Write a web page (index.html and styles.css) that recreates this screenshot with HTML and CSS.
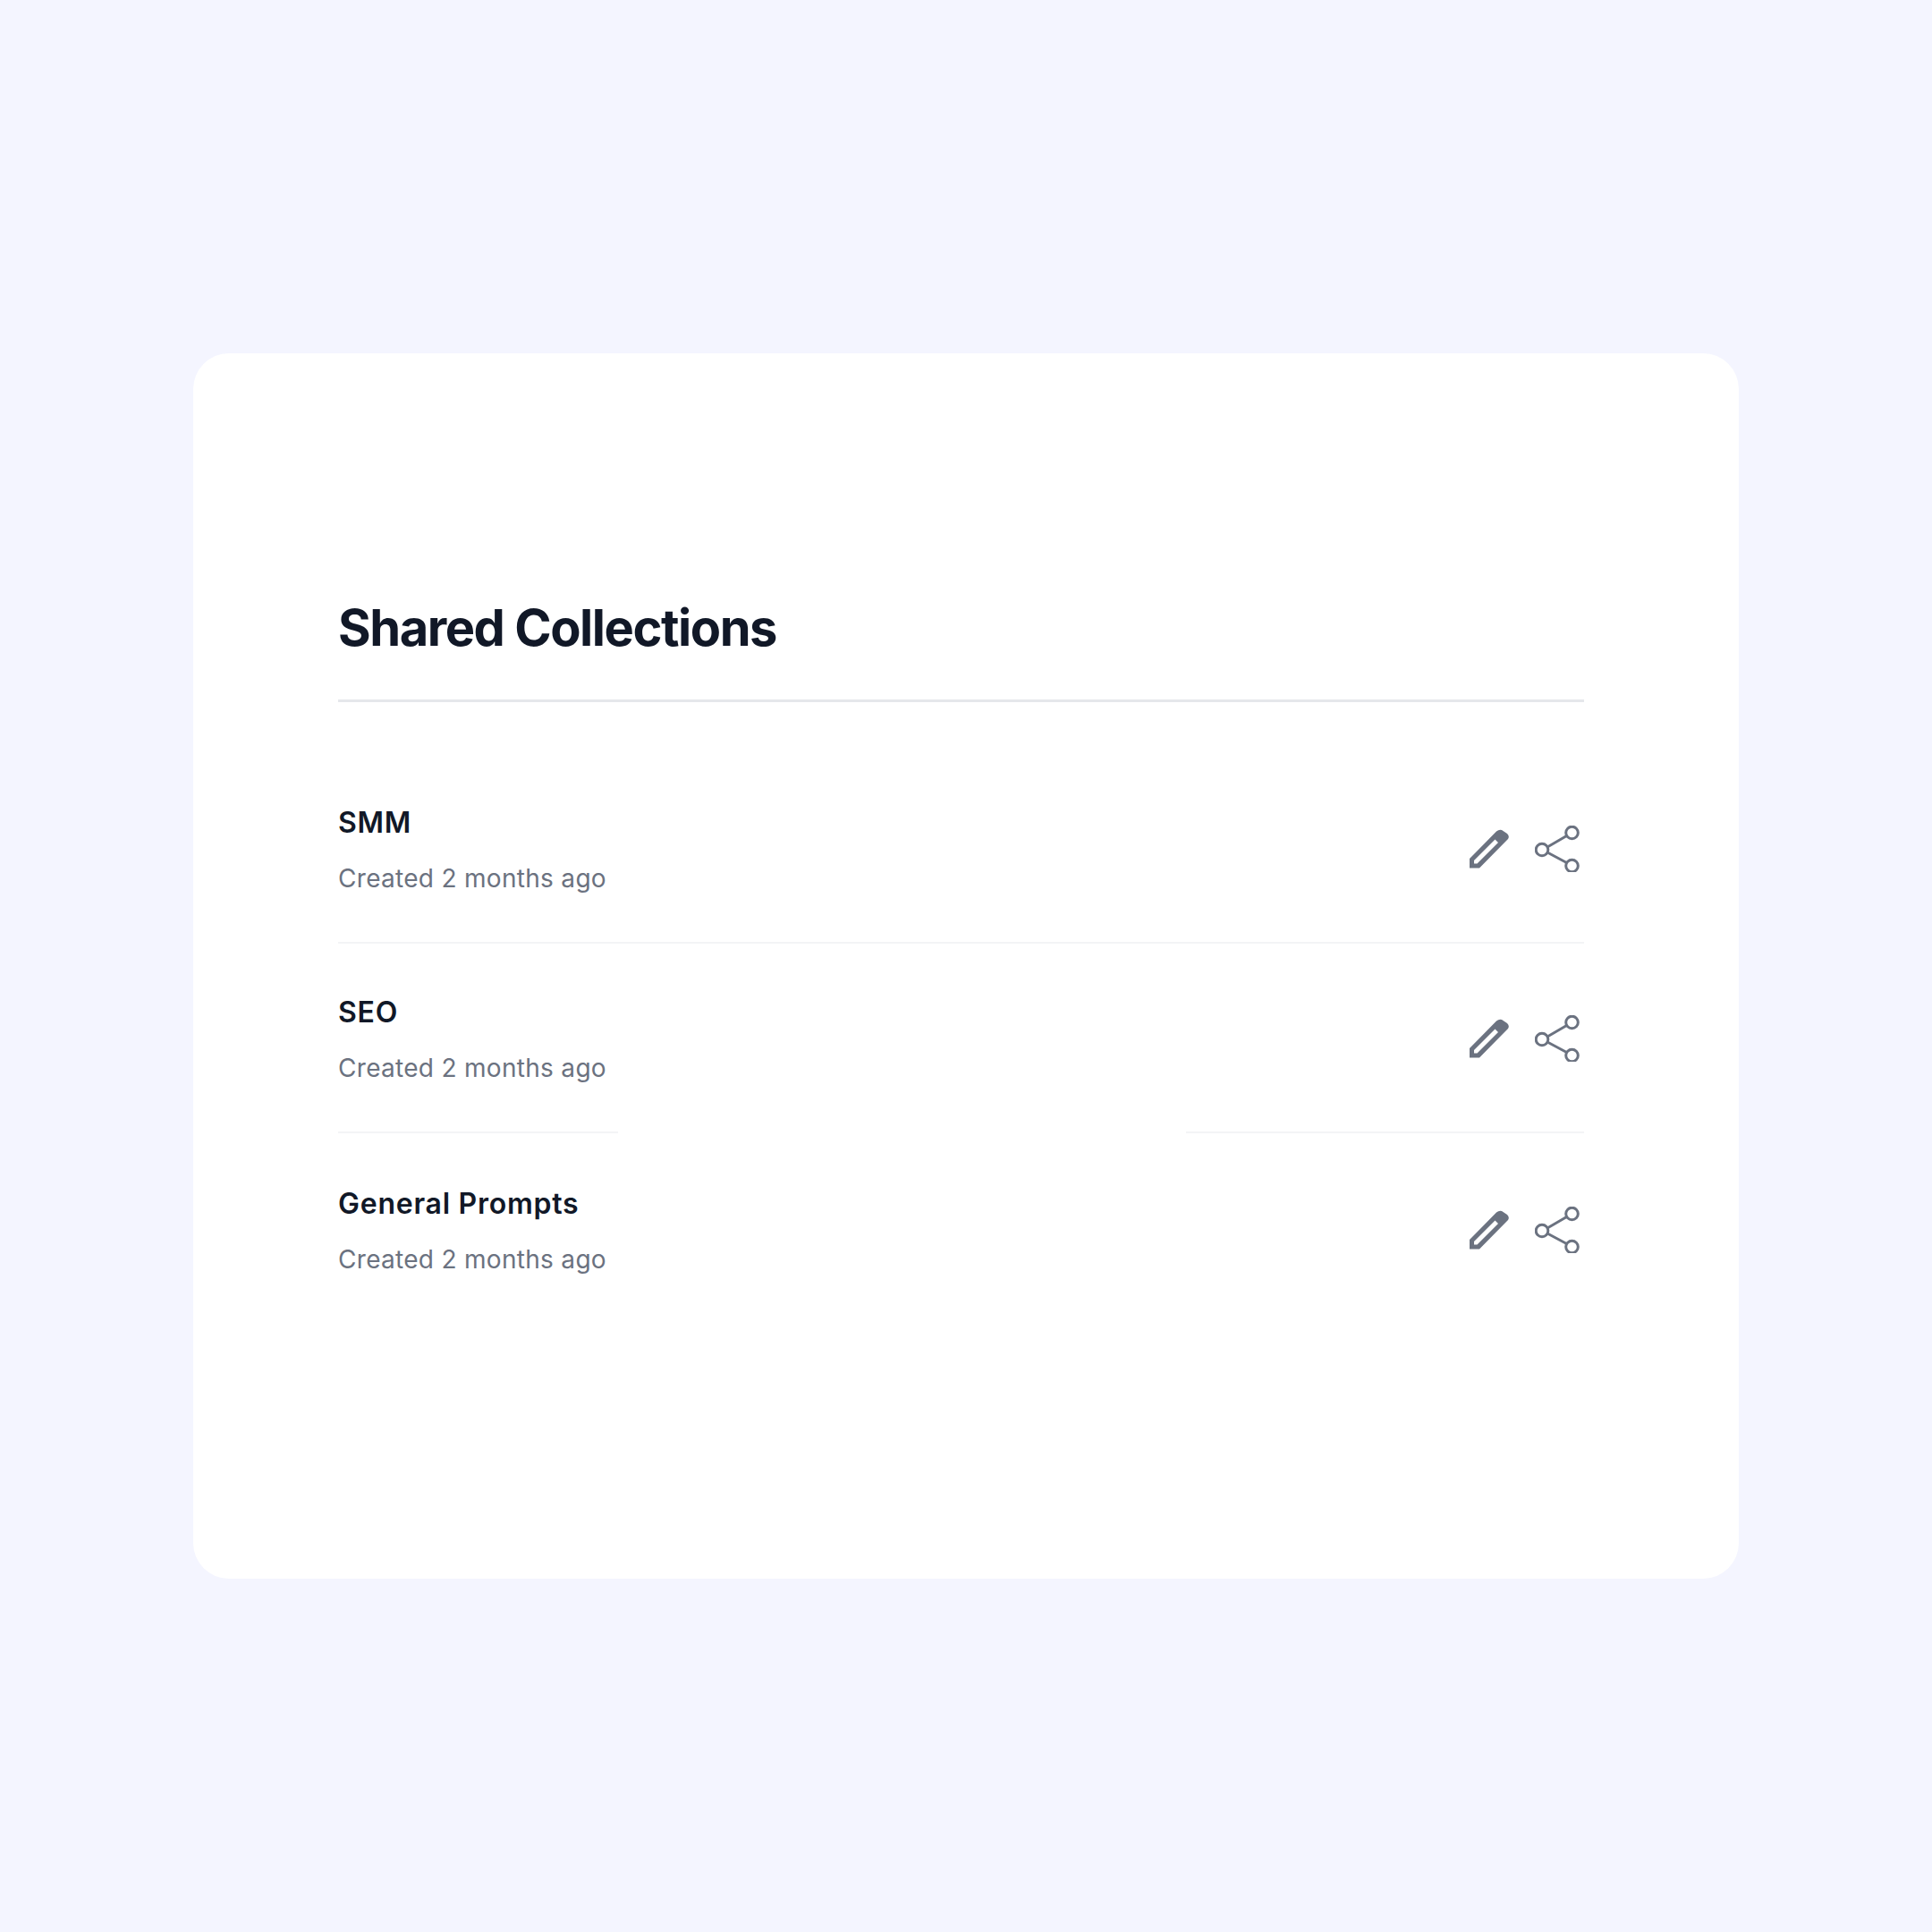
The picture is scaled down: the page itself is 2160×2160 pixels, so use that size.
FILE: index.html
```html
<!doctype html>
<html lang="en">
  <head>
    <meta charset="UTF-8" />
    <title>Shared Collections</title>
    <link rel="stylesheet" href="styles.css">
  </head>
  <body>
    <div class="card">
      <h1 class="card-title">Shared Collections</h1>

      <ul class="collection-list">
        <li class="collection-item">
          <div class="collection-info">
            <h2 class="collection-name">SMM</h2>
            <p class="collection-date">Created 2 months ago</p>
          </div>
          <div class="collection-actions">
            <svg class="icon-edit" viewBox="0 0 44 44">
              <path d="M0 43.5 V33 L30 2.5 Q33 0 36 1 L42 5 Q45 8 43 11 L11 43.5 Z M5 35 V38.5 H8.5 L32 15 L28.5 11.5 Z" />
            </svg>
            <svg class="icon-share" viewBox="0 0 50 52">
              <circle cx="41.5" cy="8" r="6.8" />
              <circle cx="8" cy="27" r="6.8" />
              <circle cx="41.5" cy="45" r="6.8" />
              <path d="M14 24 L35.5 11.5 M14 30 L35.5 41.5" />
            </svg>
          </div>
        </li>
        <li class="collection-item">
          <div class="collection-info">
            <h2 class="collection-name">SEO</h2>
            <p class="collection-date">Created 2 months ago</p>
          </div>
          <div class="collection-actions">
            <svg class="icon-edit" viewBox="0 0 44 44">
              <path d="M0 43.5 V33 L30 2.5 Q33 0 36 1 L42 5 Q45 8 43 11 L11 43.5 Z M5 35 V38.5 H8.5 L32 15 L28.5 11.5 Z" />
            </svg>
            <svg class="icon-share" viewBox="0 0 50 52">
              <circle cx="41.5" cy="8" r="6.8" />
              <circle cx="8" cy="27" r="6.8" />
              <circle cx="41.5" cy="45" r="6.8" />
              <path d="M14 24 L35.5 11.5 M14 30 L35.5 41.5" />
            </svg>
          </div>
          <div class="divider-mask"></div>
        </li>
        <li class="collection-item">
          <div class="collection-info">
            <h2 class="collection-name">General Prompts</h2>
            <p class="collection-date">Created 2 months ago</p>
          </div>
          <div class="collection-actions">
            <svg class="icon-edit" viewBox="0 0 44 44">
              <path d="M0 43.5 V33 L30 2.5 Q33 0 36 1 L42 5 Q45 8 43 11 L11 43.5 Z M5 35 V38.5 H8.5 L32 15 L28.5 11.5 Z" />
            </svg>
            <svg class="icon-share" viewBox="0 0 50 52">
              <circle cx="41.5" cy="8" r="6.8" />
              <circle cx="8" cy="27" r="6.8" />
              <circle cx="41.5" cy="45" r="6.8" />
              <path d="M14 24 L35.5 11.5 M14 30 L35.5 41.5" />
            </svg>
          </div>
        </li>
      </ul>
    </div>
  </body>
</html>
```

FILE: styles.css
```css
* {
  margin: 0;
  padding: 0;
  box-sizing: border-box;
}

body {
  font-family: Inter, sans-serif;
  background: #f4f5ff;
  min-height: 100vh;
  display: flex;
  align-items: flex-start;
  justify-content: center;
  padding-top: 395px;
}

.card {
  background: white;
  border-radius: 40px;
  width: 1728px;
  height: 1370px;
  padding: 275px 173px 0 162px;
}

.card-title {
  font-size: 56px;
  line-height: 64px;
  font-weight: 700;
  letter-spacing: -1.45px;
  color: #111827;
  padding-bottom: 48px;
  border-bottom: 3px solid #e5e7eb;
  margin-bottom: 57px;
}

.collection-list {
  list-style: none;
}

.collection-item {
  position: relative;
  display: flex;
  align-items: center;
  justify-content: space-between;
  height: 212.6px;
  padding-top: 3px;
  border-bottom: 2px solid #f3f4f6;
}

.collection-item:last-child {
  border-bottom: none;
}

.collection-info {
  padding-top: 4px;
}

.collection-name {
  font-size: 32px;
  line-height: 40px;
  font-weight: 600;
  letter-spacing: 0.75px;
  color: #111827;
  margin-bottom: 22px;
}

.collection-date {
  font-size: 28px;
  line-height: 40px;
  letter-spacing: 0.3px;
  color: #6b7280;
}

.collection-actions {
  display: flex;
  align-items: center;
  gap: 29px;
  padding-right: 5px;
}

.icon-edit {
  width: 44px;
  height: 44px;
  fill: #6b7280;
  fill-rule: evenodd;
}

.icon-share {
  width: 50px;
  height: 52px;
  fill: none;
  stroke: #6b7280;
  stroke-width: 3px;
}

/* white strip hiding the middle of the second divider */
.divider-mask {
  position: absolute;
  left: 313px;
  bottom: -2px;
  width: 635px;
  height: 2px;
  background: white;
}
```
